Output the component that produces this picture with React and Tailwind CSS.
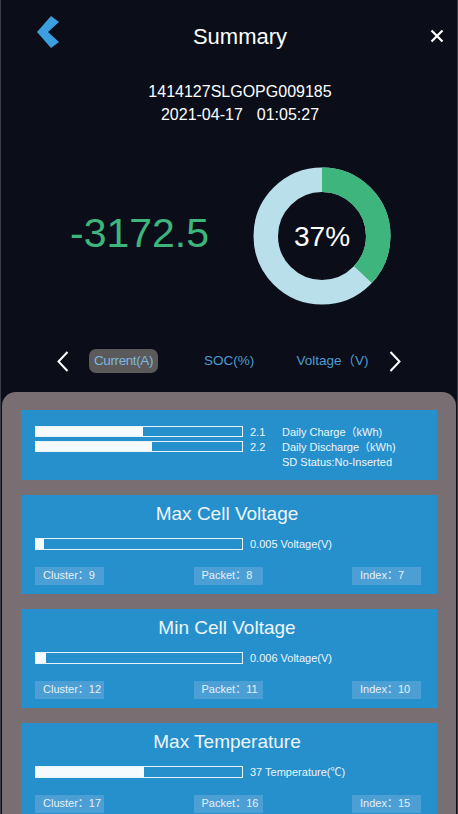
import React from 'react';

const font = { fontFamily: '"Liberation Sans", Arial, "Noto Sans CJK SC", sans-serif' };

const stats = [
  {
    title: 'Max Cell Voltage',
    fill: 8,
    value: '0.005 Voltage(V)',
    chips: ['Cluster：9', 'Packet：8', 'Index：7'],
  },
  {
    title: 'Min Cell Voltage',
    fill: 10,
    value: '0.006 Voltage(V)',
    chips: ['Cluster：12', 'Packet：11', 'Index：10'],
  },
  {
    title: 'Max Temperature',
    fill: 108,
    value: '37 Temperature(℃)',
    chips: ['Cluster：17', 'Packet：16', 'Index：15'],
  },
];

function Bar({ fill, height }) {
  return (
    <div className={`w-[208px] ${height} border border-[#e6f1f8] bg-[#2690cc] flex`}>
      <div className="h-full bg-[#f7fafc]" style={{ width: fill }} />
    </div>
  );
}

function Donut({ percent }) {
  const r = 56.25;
  const c = 2 * Math.PI * r;
  return (
    <div className="relative w-[138px] h-[138px]">
      <svg width="138" height="138" viewBox="0 0 138 138">
        <circle cx="69" cy="69" r={r} fill="none" stroke="#b9dfeb" strokeWidth="24.5" />
        <circle
          cx="69"
          cy="69"
          r={r}
          fill="none"
          stroke="#3db57c"
          strokeWidth="24.5"
          strokeDasharray={`${(c * percent) / 100} ${c}`}
          transform="rotate(-90 69 69)"
        />
      </svg>
      <div className="absolute inset-0 flex items-center justify-center text-white text-[28px] pt-[1px]">
        {percent}%
      </div>
    </div>
  );
}

export default function App() {
  return (
    <div
      className="w-[458px] h-[814px] overflow-hidden bg-[#0b0e19] border-x border-[#3a3e47] flex flex-col"
      style={font}
    >
      {/* Header */}
      <div className="h-[72px] shrink-0 grid grid-cols-[1fr_auto_1fr] items-center">
        <div className="pl-[35px] mb-[8px]">
          <svg width="24" height="34" viewBox="0 0 24 34">
            <polygon points="15,1 23,7 12,17 23,27 15,33 1,17" fill="#3b9fe0" />
          </svg>
        </div>
        <div className="text-white text-[22px] pl-[22px]">Summary</div>
        <div className="flex justify-end pr-[13px]">
          <svg width="14" height="14" viewBox="0 0 14 14">
            <path d="M1.5 1.5 L12.5 12.5 M12.5 1.5 L1.5 12.5" stroke="#ffffff" strokeWidth="2.2" />
          </svg>
        </div>
      </div>

      {/* Serial / date */}
      <div className="pt-[8px] pl-[22px] text-center text-white text-[16px] leading-[23px]">
        <div>1414127SLGOPG009185</div>
        <div>
          2021-04-17<span className="ml-[14px]">01:05:27</span>
        </div>
      </div>

      {/* Value + donut */}
      <div className="mt-[41px] flex items-center">
        <div className="w-[252px] pl-[69px] mb-[4px] text-[#3db57c] text-[41px]">
          -3172.5
        </div>
        <Donut percent={37} />
      </div>

      {/* Tabs */}
      <div className="mt-[44px] h-[24px] flex items-center text-[13.5px]">
        <div className="ml-[56px] w-[12px] flex">
          <svg width="12" height="21" viewBox="0 0 12 21">
            <path d="M10.5 1 L1.5 10.5 L10.5 20" fill="none" stroke="#ffffff" strokeWidth="2" />
          </svg>
        </div>
        <div className="ml-[20px] w-[69px] h-[24px] rounded-[7px] bg-[#5b5959] flex items-center justify-center text-[#7ab8df] tracking-[-0.4px]">
          Current(A)
        </div>
        <div className="ml-[44px] w-[54px] text-center text-[#4b9cd1]">SOC(%)</div>
        <div className="ml-[39px] w-[75px] text-center text-[#4b9cd1] whitespace-nowrap">Voltage（V)</div>
        <div className="ml-[19px] w-[12px] flex">
          <svg width="12" height="21" viewBox="0 0 12 21">
            <path d="M1.5 1 L10.5 10.5 L1.5 20" fill="none" stroke="#ffffff" strokeWidth="2" />
          </svg>
        </div>
      </div>

      {/* Panel */}
      <div className="mt-[19px] mx-[1px] flex-1 rounded-t-[14px] bg-[#796e72] pt-[18px] px-[19px] flex flex-col gap-[15px]">
        {/* Daily card */}
        <div className="h-[70px] shrink-0 bg-[#2690cc] pt-[15px] pl-[14px] text-[11px] text-[#eef5fa]">
          <div className="h-[15px] flex items-center">
            <div className="mb-[3px]">
              <Bar fill={107} height="h-[11px]" />
            </div>
            <div className="w-[39px] pl-[7px]">2.1</div>
            <div className="whitespace-nowrap">Daily Charge（kWh)</div>
          </div>
          <div className="h-[15px] flex items-center">
            <div className="mb-[3px]">
              <Bar fill={116} height="h-[11px]" />
            </div>
            <div className="w-[39px] pl-[7px]">2.2</div>
            <div className="whitespace-nowrap">Daily Discharge（kWh)</div>
          </div>
          <div className="h-[15px] flex items-center pl-[247px] whitespace-nowrap">SD Status:No-Inserted</div>
        </div>

        {stats.map((s) => (
          <div key={s.title} className="h-[99px] shrink-0 bg-[#2690cc] pt-[7px] px-[14px] pr-[16px] text-[#eef5fa]">
            <div className="text-center text-[19px] leading-[24px] pr-[2px]">{s.title}</div>
            <div className="mt-[10px] flex items-center">
              <Bar fill={s.fill} height="h-[12px]" />
              <div className="ml-[7px] text-[11px] whitespace-nowrap">{s.value}</div>
            </div>
            <div className="mt-[14px] flex justify-between">
              {s.chips.map((c) => (
                <div
                  key={c}
                  className="w-[69px] h-[18px] bg-[#4c9fd5] flex items-center pl-[8px] text-[11px] text-[#e6f0f8] whitespace-nowrap"
                >
                  {c}
                </div>
              ))}
            </div>
          </div>
        ))}
      </div>
    </div>
  );
}
